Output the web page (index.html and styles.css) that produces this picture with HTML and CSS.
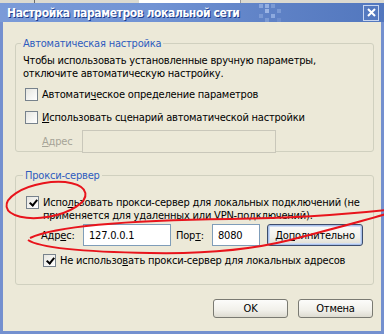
FILE: index.html
```html
<!DOCTYPE html>
<html lang="ru">
<head>
  <meta charset="UTF-8">
  <title>Настройка параметров локальной сети</title>
  <link rel="stylesheet" href="styles.css">
</head>
<body>
  <div class="behind">
    <span class="seg seg-a"></span>
    <span class="seg seg-b"></span>
    <span class="seg seg-c"></span>
    <span class="seg seg-d"></span>
  </div>

  <div class="window">
    <div class="titlebar">
      <span class="title">Настройка параметров локальной сети</span>
      <svg class="checker" width="34" height="18" viewBox="0 0 34 18">
        <rect x="4" y="0" width="4" height="4" fill="#8eaae0"/>
        <rect x="10" y="0" width="4" height="4" fill="#9bb5e6"/>
        <rect x="16" y="0" width="4" height="4" fill="#7f9dd6"/>
        <rect x="10" y="5" width="4" height="4" fill="#a3bbe8"/>
        <rect x="22" y="5" width="4" height="4" fill="#7f9dd6"/>
        <rect x="4" y="10" width="4" height="4" fill="#7f9dd6"/>
        <rect x="16" y="10" width="4" height="4" fill="#93afe2"/>
        <rect x="10" y="14" width="4" height="4" fill="#7f9dd6"/>
        <rect x="22" y="14" width="4" height="4" fill="#6f8fce"/>
      </svg>
      <span class="close">
        <svg width="13" height="13" viewBox="0 0 13 13">
          <path d="M3 3 L10 10 M10 3 L3 10" stroke="#fff" stroke-width="2" fill="none"/>
        </svg>
      </span>
    </div>

    <div class="content">
      <fieldset class="group group-auto">
        <legend>Автоматическая настройка</legend>
        <p class="hint">Чтобы использовать установленные вручную параметры,<br>отключите автоматическую настройку.</p>
        <label class="check check-1"><span class="box"></span><span>Автомати<u>ч</u>еское определение параметров</span></label>
        <label class="check check-2"><span class="box"></span><span><u>И</u>спользовать сценарий автоматической настройки</span></label>
        <div class="script-row">
          <span class="disabled"><u>А</u>дрес</span>
          <span class="field field-off"></span>
        </div>
      </fieldset>

      <fieldset class="group group-proxy">
        <legend>Прокси-сервер</legend>
        <label class="check check-3"><span class="box on"></span><span>Испо<u>л</u>ьзовать прокси-сервер для локальных подключений (не<br>применяется для удаленных или VPN-подключений).</span></label>
        <div class="proxy-row">
          <span class="lbl lbl-addr">Адр<u>е</u>с:</span>
          <span class="field field-addr">127.0.0.1</span>
          <span class="lbl lbl-port">Пор<u>т</u>:</span>
          <span class="field field-port">8080</span>
          <span class="btn btn-more"><span>До<u>п</u>олнительно</span></span>
        </div>
        <label class="check check-4"><span class="box on"></span><span>Не использо<u>в</u>ать прокси-сервер для локальных адресов</span></label>
      </fieldset>

      <div class="actions">
        <span class="btn btn-ok">OK</span>
        <span class="btn btn-cancel">Отмена</span>
      </div>
    </div>
  </div>

  <!-- red marker annotations drawn over the dialog -->
  <svg class="marks" width="384" height="334" viewBox="0 0 384 334">
    <ellipse cx="46" cy="200" rx="40" ry="17" transform="rotate(-10 46 200)"/>
    <path d="M30 238 C 60 224, 150 220, 230 219 C 290 218, 330 216, 386 210
             M386 214 C 360 222, 320 232, 290 240 C 250 250, 200 254, 150 253 C 90 252, 40 248, 28 240"/>
  </svg>
</body>
</html>
```

FILE: styles.css
```css
body {
  margin: 0;
  width: 384px;
  height: 334px;
  overflow: hidden;
  background: #ece9d8;
  font-family: "DejaVu Sans Condensed", "DejaVu Sans", sans-serif;
  font-size: 11px;
  letter-spacing: -0.2px;
  color: #000;
  position: relative;
}

.behind {
  height: 3px;
  display: flex;
  background: #dcdad0;
}

.seg { display: block; height: 3px; }
.seg-a { width: 34px; border-right: 1px solid #6b6b6b; }
.seg-b { width: 104px; }
.seg-c { width: 101px; background: #fff; border-right: 1px solid #9a9a9a; }
.seg-d { flex: 1; }

.window {
  height: 331px;
  display: flex;
  flex-direction: column;
  background: #7490cf;
  box-sizing: border-box;
  padding: 0 3px 3px;
}

.titlebar {
  height: 19px;
  margin: 0 -3px;
  padding: 0 5px 0 7px;
  display: flex;
  align-items: center;
  background: linear-gradient(to right, #7b9bd8 0%, #7193d4 40%, #5f82c6 70%, #5277be 100%);
}

.title {
  color: #fff;
  font-weight: bold;
  font-size: 12px;
  letter-spacing: -0.4px;
  text-shadow: 1px 1px 0 #1a3a8a;
  white-space: nowrap;
}

.checker {
  margin-left: 16px;
  opacity: 0.9;
}

.close {
  margin-left: auto;
  width: 14px;
  height: 14px;
  border: 1px solid #c8d6f0;
  display: flex;
  align-items: center;
  justify-content: center;
}

.content {
  flex: 1;
  background: #ece9d8;
  padding: 15px 7px 0 12px;
  display: flex;
  flex-direction: column;
}

.group {
  margin: 0;
  padding: 0 0 0 7px;
  border: 1px solid #d0d0bf;
  border-radius: 3px;
}

.group legend {
  padding: 0 2px;
  margin-left: -2px;
  color: #2e5cbe;
  line-height: 13px;
}

.group-auto {
  height: 115px;
  box-sizing: border-box;
}

.hint {
  margin: 4px 0 0;
  line-height: 13px;
}

.check {
  display: flex;
  align-items: flex-start;
  line-height: 13px;
  gap: 4px;
}

.check-1 { margin: 8px 0 0 2px; }
.check-2 { margin: 10px 0 0 2px; }

.box {
  width: 11px;
  height: 11px;
  border: 1px solid #77828c;
  background: linear-gradient(135deg, #e6e6e0 0%, #fff 100%);
  flex: none;
  position: relative;
}

.box.on::after {
  content: "";
  position: absolute;
  left: 4px;
  top: 1px;
  width: 3px;
  height: 6px;
  border: solid #000;
  border-width: 0 2px 2px 0;
  transform: rotate(40deg);
}

.script-row {
  display: flex;
  align-items: center;
  margin: 6px 0 0 19px;
}

.disabled {
  color: #a6a497;
  width: 40px;
}

.field {
  box-sizing: border-box;
  border: 1px solid #7f9db9;
  background: #fff;
  display: flex;
  align-items: center;
}

.field-off {
  width: 194px;
  height: 23px;
  background: #ece9d8;
  border-color: #c9c7ba;
}

.group-proxy {
  margin-top: 17px;
  height: 116px;
  box-sizing: border-box;
  padding-left: 9px;
}

.check-3 { margin: 14px 0 0 1px; }

.proxy-row {
  display: flex;
  align-items: center;
  margin: 2px 0 0 16px;
  height: 22px;
}

.lbl-addr { width: 42px; }
.lbl-port { margin-left: 5px; width: 36px; }

.field-addr { width: 88px; height: 22px; padding-left: 5px; }
.field-port { width: 48px; height: 22px; padding-left: 5px; }

.btn {
  box-sizing: border-box;
  border: 1px solid #7a7a72;
  border-radius: 3px;
  background: linear-gradient(#fcfcfa 0%, #f1f0ea 60%, #dedcd1 100%);
  display: flex;
  align-items: center;
  justify-content: center;
}

.btn-more {
  margin-left: 7px;
  width: 96px;
  height: 22px;
  border-color: #3d4c6c;
  box-shadow: inset 0 0 0 1px #a9c1ea, inset 0 0 0 2px #cfdcf4;
}

.check-4 { margin: 8px 0 0 18px; }

.actions {
  display: flex;
  justify-content: flex-end;
  gap: 10px;
  margin-top: 14px;
  padding-right: 1px;
}

.btn-ok, .btn-cancel {
  width: 75px;
  height: 19px;
}

.marks {
  position: absolute;
  left: 0;
  top: 0;
  pointer-events: none;
}

.marks ellipse, .marks path {
  fill: none;
  stroke: #e8141c;
  stroke-width: 2;
}
```
